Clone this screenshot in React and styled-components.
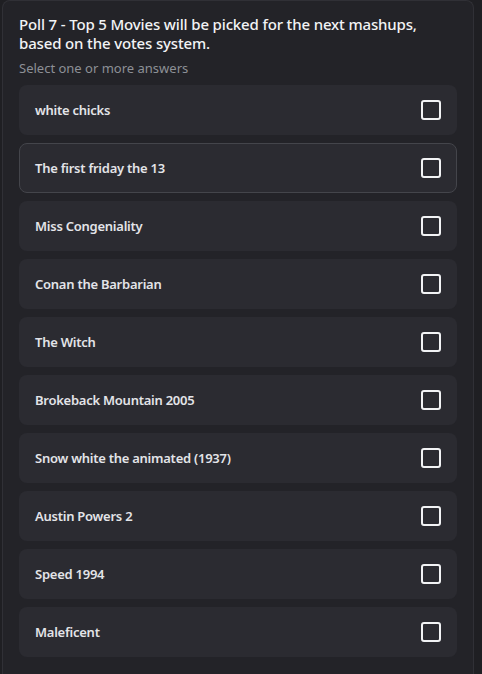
import React from "react";
import styled, { createGlobalStyle } from "styled-components";

const Global = createGlobalStyle`
  html, body { margin: 0; padding: 0; background: #1f1f23; }
  body { font-family: "Noto Sans", "Open Sans", sans-serif; }
`;

const Card = styled.div`
  margin-left: 2px;
  width: 472px;
  min-height: 700px;
  box-sizing: border-box;
  background: #232328;
  border: 1px solid #303036;
  border-bottom: none;
  border-radius: 8px 8px 0 0;
  padding: 14px 16px 0 16px;
`;

const Title = styled.div`
  color: #f2f3f5;
  font-size: 15px;
  font-weight: 500;
  line-height: 19px;
  letter-spacing: -0.15px;
`;

const Hint = styled.div`
  color: #8d9096;
  font-size: 13px;
  line-height: 18px;
  margin-top: 6px;
`;

const List = styled.div`
  display: flex;
  flex-direction: column;
  gap: 8px;
  margin-top: 8px;
`;

const Option = styled.div`
  height: 50px;
  box-sizing: border-box;
  display: flex;
  align-items: center;
  justify-content: space-between;
  padding: 0 15px;
  background: #2b2b31;
  border-radius: 8px;
  border: 1px solid ${(p) => (p.$hover ? "#44454b" : "transparent")};
`;

const Label = styled.span`
  color: #e3e4e8;
  font-size: 13px;
  font-weight: 600;
  letter-spacing: -0.25px;
`;

const Box = styled.span`
  width: 20px;
  height: 20px;
  box-sizing: border-box;
  border: 2px solid #f2f3f5;
  border-radius: 3px;
`;

const items = [
  "white chicks",
  "The first friday the 13",
  "Miss Congeniality",
  "Conan the Barbarian",
  "The Witch",
  "Brokeback Mountain 2005",
  "Snow white the animated (1937)",
  "Austin Powers 2",
  "Speed 1994",
  "Maleficent",
];

export default function App() {
  return (
    <>
      <Global />
      <Card>
        <Title>
          Poll 7 - Top 5 Movies will be picked for the next mashups,
          <br />
          based on the votes system.
        </Title>
        <Hint>Select one or more answers</Hint>
        <List>
          {items.map((t, i) => (
            <Option key={t} $hover={i === 1}>
              <Label>{t}</Label>
              <Box />
            </Option>
          ))}
        </List>
      </Card>
    </>
  );
}
